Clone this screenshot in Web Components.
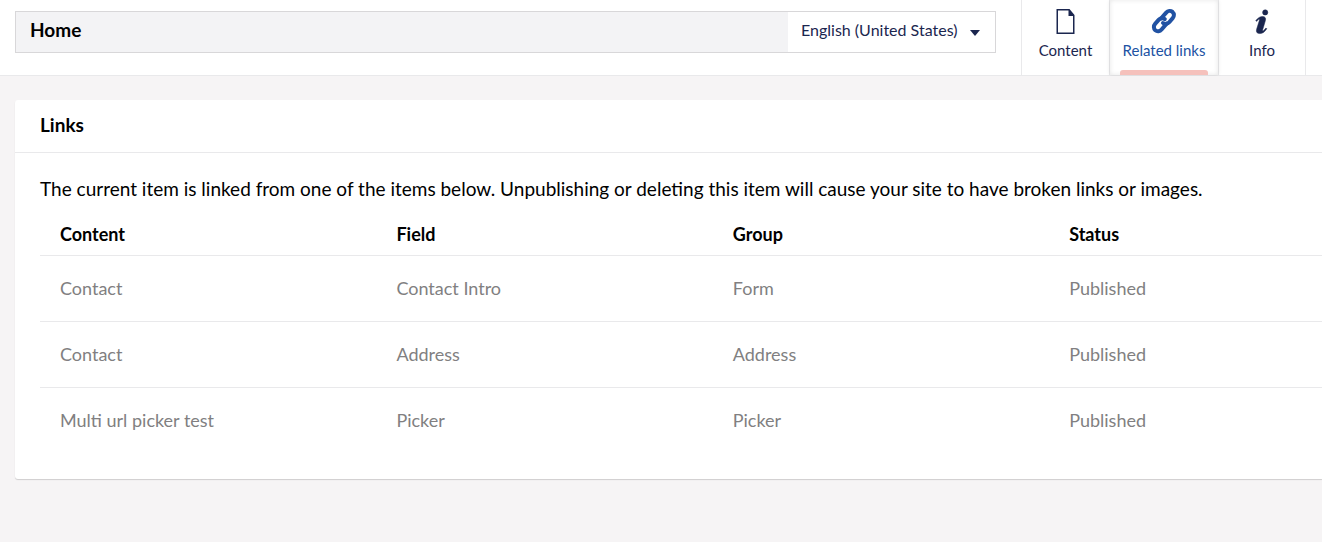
<!DOCTYPE html>
<html lang="en">
<head>
<meta charset="utf-8">
<title>Home - Related links</title>
<style>
  html, body { margin: 0; min-height: 100%; }
  body { background: #f6f4f5; color: #000; font-family: Lato, sans-serif; font-size: 18px; line-height: 24px; }
</style>
</head>
<body>
<content-editor></content-editor>

<script>
const define = (name, html, setup) => customElements.define(name, class extends HTMLElement {
  constructor() {
    super();
    const template = document.createElement('template');
    template.innerHTML = html;
    this.attachShadow({ mode: 'open' }).append(template.content.cloneNode(true));
  }
  connectedCallback() { if (setup) setup(this, this.shadowRoot); }
});

define('editor-name', `
  <style>
    :host { display: flex; flex: 1; min-width: 0; height: 40px; border: 1px solid #d8d7d9; background: #f3f3f5; }
    input { flex: 1; min-width: 0; box-sizing: border-box; border: 0; padding: 0 14px 4px; background: none; color: #000; font: 700 19px/24px Lato, sans-serif; outline: 0; }
    .language { display: grid; background: #fff; }
    select { grid-area: 1 / 1; appearance: none; border: 0; padding: 0 34px 4px 13px; width: 207px; background: none; color: #1b264f; font: 400 16px/24px Lato, sans-serif; outline: 0; }
    svg { grid-area: 1 / 1; place-self: center end; margin: 2px 15px 0 0; pointer-events: none; }
  </style>
  <input type="text" aria-label="Name" value="Home">
  <div class="language">
    <select aria-label="Language"><option>English (United States)</option></select>
    <svg width="10" height="6" viewBox="0 0 10 6" aria-hidden="true"><path fill="#1b264f" d="M0 0h10L5 6z"/></svg>
  </div>
`);

define('editor-tab', `
  <style>
    :host { display: block; border-right: 1px solid #e9e9eb; }
    button { display: flex; flex-direction: column; align-items: center; gap: 4px; position: relative; box-sizing: border-box; height: 75px; width: 100%; border: 0; padding: 8px 0 0; background: #fff; color: #1b264f; font: 400 15px/20px Lato, sans-serif; cursor: pointer; }
    :host([active]) button { color: #2152a3; box-shadow: 0 0 4px rgba(0, 0, 0, .1), inset 0 0 5px rgba(0, 0, 0, .1); clip-path: inset(0 -5px -1px -5px); z-index: 1; }
    :host([active]) button::after { content: ""; position: absolute; left: 10px; right: 10px; bottom: 0; height: 5px; border-radius: 3px 3px 0 0; background: #f5c1bc; }
    .icon { display: flex; justify-content: center; height: 28px; align-items: start; }
  </style>
  <button type="button" role="tab"><span class="icon"><slot name="icon"></slot></span><span><slot></slot></span></button>
`, (host, root) => root.querySelector('button').setAttribute('aria-selected', host.hasAttribute('active')));

define('editor-header', `
  <style>
    :host { display: flex; align-items: stretch; gap: 25px; height: 75px; padding: 0 16px 0 15px; background: #fff; border-bottom: 1px solid #e9e9eb; }
    editor-name { margin-top: 11px; }
    nav { display: grid; grid-template-columns: 88px 109px 87px; border-left: 1px solid #e9e9eb; }
    svg { display: block; }
  </style>
  <editor-name></editor-name>
  <nav role="tablist" aria-label="Views">
    <editor-tab>
      <svg slot="icon" width="24" height="28" viewBox="0 0 24 28" aria-hidden="true"><path fill="#1b264f" fill-rule="evenodd" d="M2.500 1h13l5 6v19h-18zM4 2.500v22h15V8h-4.500V2.500z"/></svg>
      Content
    </editor-tab>
    <editor-tab active>
      <svg slot="icon" width="26" height="28" viewBox="0 0 26 28" aria-hidden="true">
        <g fill="none" stroke="#2152a3" stroke-width="4" stroke-linecap="round" stroke-linejoin="round">
          <path d="M10.200 10.300l5-5.700c1.700-2 4.500-2.200 6.300-.7 1.800 1.600 1.900 4.400.2 6.300l-3.500 4c-1.700 1.900-4.300 2.200-6.200.8"/>
          <path d="M15.600 15.600l-5 5.900c-1.700 2-4.500 2.200-6.300.7-1.800-1.600-1.900-4.400-.2-6.300l3.500-4c1.700-1.900 4.300-2.200 6.200-.8"/>
        </g>
      </svg>
      Related links
    </editor-tab>
    <editor-tab>
      <svg slot="icon" width="14" height="28" viewBox="0 0 14 28" aria-hidden="true">
        <g fill="#1b264f" stroke="#1b264f" stroke-width=".5">
          <circle cx="10.200" cy="4.400" r="2.600"/>
          <path d="M.8 12.600C3 9.700 5.300 8.500 7.500 8.500c2.700 0 3.600 1.700 2.900 4.100L7.700 21.700c-.3 1 .2 1.400 1 .8.800-.6 1.500-1.400 2.200-2.400l.9.600c-2 3.200-4.400 4.900-6.900 4.900-2.900 0-4.100-1.600-3.300-4.300l2.800-9c.3-1-.2-1.200-.9-.7-.7.500-1.300 1.100-1.900 1.800z"/>
        </g>
      </svg>
      Info
    </editor-tab>
  </nav>
`);

define('content-box', `
  <style>
    :host { display: block; background: #fff; border-radius: 3px 0 0 3px; box-shadow: 0 1px 1px rgba(0, 0, 0, .16); }
    header { padding: 13px 25px 15px; border-bottom: 1px solid #e9e9eb; }
    .body { padding: 24px 0 26px 25px; }
    ::slotted(h2) { margin: 0; font-size: 19px; line-height: 24px; font-weight: 700; }
  </style>
  <header><slot name="title"></slot></header>
  <div class="body"><slot></slot></div>
`);

define('links-table', `
  <style>
    :host { display: block; }
    table { width: 100%; table-layout: fixed; border-collapse: collapse; text-align: left; }
    th, td { box-sizing: border-box; padding: 0 20px; }
    th { width: 26.24%; height: 42px; font-size: 18px; font-weight: 700; }
    th:last-child { width: auto; }
    td { height: 66px; border-top: 1px solid #e9e9eb; color: #817f81; font-size: 18px; }
  </style>
  <table>
    <thead><tr><th scope="col">Content</th><th scope="col">Field</th><th scope="col">Group</th><th scope="col">Status</th></tr></thead>
    <tbody>
      <tr><td>Contact</td><td>Contact Intro</td><td>Form</td><td>Published</td></tr>
      <tr><td>Contact</td><td>Address</td><td>Address</td><td>Published</td></tr>
      <tr><td>Multi url picker test</td><td>Picker</td><td>Picker</td><td>Published</td></tr>
    </tbody>
  </table>
`);

define('content-editor', `
  <style>
    :host { display: block; }
    main { padding: 24px 0 24px 15px; }
    p { margin: 0 0 12px; font-size: 19px; line-height: 24px; }
  </style>
  <editor-header></editor-header>
  <main>
    <content-box>
      <h2 slot="title">Links</h2>
      <p>The current item is linked from one of the items below. Unpublishing or deleting this item will cause your site to have broken links or images.</p>
      <links-table></links-table>
    </content-box>
  </main>
`);
</script>
</body>
</html>
